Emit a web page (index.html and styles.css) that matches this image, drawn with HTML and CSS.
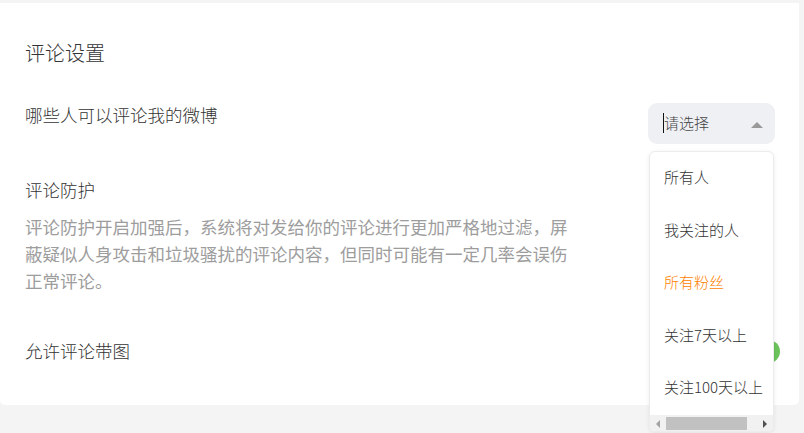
FILE: index.html
```html
<!DOCTYPE html>
<html lang="zh-CN">
<head>
<meta charset="utf-8">
<link rel="stylesheet" href="styles.css">
</head>
<body>
<div class="page">
  <div class="card">
    <h2 class="title">评论设置</h2>
    <div class="row row-who">
      <div class="label">哪些人可以评论我的微博</div>
      <div class="select">
        <span class="caret"></span><span class="placeholder">请选择</span>
        <span class="arrow"></span>
      </div>
    </div>
    <div class="row row-protect">
      <div class="block">
        <div class="label">评论防护</div>
        <p class="desc">评论防护开启加强后，系统将对发给你的评论进行更加严格地过滤，屏蔽疑似人身攻击和垃圾骚扰的评论内容，但同时可能有一定几率会误伤正常评论。</p>
      </div>
    </div>
    <div class="row row-pic">
      <div class="label">允许评论带图</div>
      <div class="switch"></div>
    </div>
  </div>
  <div class="dropdown">
    <ul class="options">
      <li>所有人</li>
      <li>我关注的人</li>
      <li class="active">所有粉丝</li>
      <li>关注7天以上</li>
      <li>关注100天以上</li>
    </ul>
    <div class="hscroll">
      <span class="sb-left"></span>
      <span class="sb-thumb"></span>
      <span class="sb-right"></span>
    </div>
  </div>
</div>
</body>
</html>
```
FILE: styles.css
```css
* { box-sizing: border-box; }
html, body {
  margin: 0;
  padding: 0;
  background: #f4f4f4;
  font-family: "Noto Sans CJK SC", "Liberation Sans", sans-serif;
  font-weight: 300;
  color: #333;
}
.page {
  position: relative;
  width: 804px;
  height: 433px;
  padding-top: 3px;
  overflow: hidden;
}
.card {
  width: 799px;
  height: 402px;
  background: #fff;
  border-radius: 0 0 5px 5px;
  padding: 36px 24px 0 25px;
}
.title {
  margin: 0;
  font-size: 20px;
  font-weight: 300;
  line-height: 28px;
  color: #333;
}
.row {
  display: flex;
  justify-content: space-between;
  align-items: flex-start;
}
.label {
  font-size: 17.5px;
  line-height: 24px;
  color: #333;
}
.row-who { margin-top: 36px; }
.select {
  position: relative;
  width: 127px;
  height: 41px;
  background: #eff0f4;
  border-radius: 9px;
  display: flex;
  align-items: center;
  padding-left: 15px;
  padding-bottom: 2px;
  font-size: 15px;
  color: #444;
}
.caret {
  width: 1px;
  height: 20px;
  background: #111;
}
.placeholder { line-height: 20px; }
.arrow {
  position: absolute;
  right: 12px;
  top: 19px;
  width: 0;
  height: 0;
  border-left: 6px solid transparent;
  border-right: 6px solid transparent;
  border-bottom: 6px solid #999;
}
.row-protect { margin-top: 34px; }
.desc {
  margin: 11px 0 0;
  width: 552px;
  font-size: 17.5px;
  font-weight: 400;
  line-height: 27px;
  color: #9d9d9d;
}
.row-pic {
  margin-top: 45px;
  align-items: center;
}
.switch {
  width: 44px;
  height: 23px;
  border-radius: 12px;
  background: #6cc35b;
  margin-right: -5px;
}
.dropdown {
  position: absolute;
  left: 649px;
  top: 151px;
  width: 125px;
  height: 281px;
  background: #fff;
  border: 1px solid #ececec;
  border-radius: 6px;
  box-shadow: 0 1px 4px rgba(0,0,0,0.08);
  overflow: hidden;
}
.options {
  list-style: none;
  margin: 0;
  padding: 0;
}
.options li {
  height: 52.5px;
  line-height: 50px;
  padding-left: 14px;
  font-size: 15px;
  color: #333;
  white-space: nowrap;
}
.options li.active { color: #ff8200; }
.hscroll {
  position: relative;
  height: 17px;
  background: #f1f1f1;
}
.sb-left {
  position: absolute;
  left: 6px;
  top: 5px;
  border-top: 4px solid transparent;
  border-bottom: 4px solid transparent;
  border-right: 4px solid #a3a3a3;
}
.sb-right {
  position: absolute;
  right: 6px;
  top: 5px;
  border-top: 4px solid transparent;
  border-bottom: 4px solid transparent;
  border-left: 4px solid #505050;
}
.sb-thumb {
  position: absolute;
  left: 16px;
  top: 2px;
  width: 81px;
  height: 13px;
  background: #c1c1c1;
}
```
